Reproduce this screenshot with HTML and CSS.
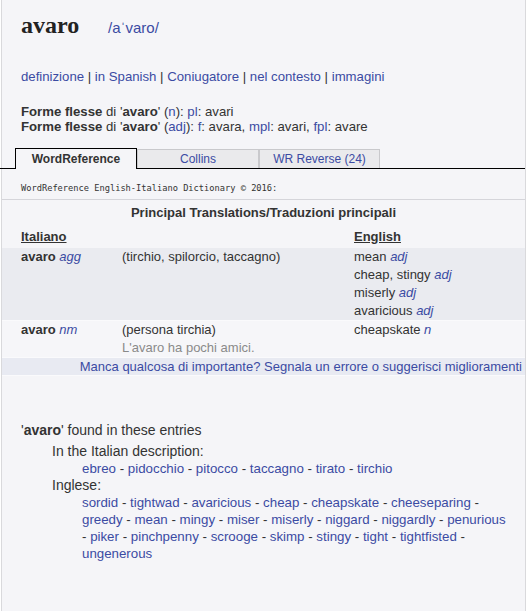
FILE: index.html
```html
<!DOCTYPE html>
<html lang="it">
<head>
<meta charset="utf-8">
<title>avaro - WordReference</title>
<link rel="stylesheet" href="styles.css">
</head>
<body>
<div class="page">
  <header class="head">
    <h1 class="hw">avaro</h1>
    <span class="pron">/aˈvaro/</span>
  </header>

  <nav class="links">
    <a href="#">definizione</a> | <a href="#">in Spanish</a> | <a href="#">Coniugatore</a> | <a href="#">nel contesto</a> | <a href="#">immagini</a>
  </nav>

  <div class="infl">
    <div><b>Forme flesse</b> di '<b>avaro</b>' (<a href="#">n</a>): <a href="#">pl</a>: avari</div>
    <div><b>Forme flesse</b> di '<b>avaro</b>' (<a href="#">adj</a>): <a href="#">f</a>: avara, <a href="#">mpl</a>: avari, <a href="#">fpl</a>: avare</div>
  </div>

  <div class="tabs">
    <span class="tab active">WordReference</span>
    <span class="tab"><a href="#">Collins</a></span>
    <span class="tab"><a href="#">WR Reverse (24)</a></span>
  </div>

  <div class="copy">WordReference English-Italiano Dictionary © 2016:</div>

  <table class="wrd">
    <tr class="title"><td colspan="3">Principal Translations/Traduzioni principali</td></tr>
    <tr class="langs"><td class="c1">Italiano</td><td class="c2"></td><td class="c3">English</td></tr>
    <tr class="even">
      <td class="c1"><b>avaro</b> <i>agg</i></td>
      <td class="c2">(tirchio, spilorcio, taccagno)</td>
      <td class="c3">mean <i>adj</i><br>cheap, stingy <i>adj</i><br>miserly <i>adj</i><br>avaricious <i>adj</i></td>
    </tr>
    <tr class="odd">
      <td class="c1"><b>avaro</b> <i>nm</i></td>
      <td class="c2">(persona tirchia)<br><span class="ex">L'avaro ha pochi amici.</span></td>
      <td class="c3">cheapskate <i>n</i></td>
    </tr>
    <tr class="more"><td colspan="3"><a href="#">Manca qualcosa di importante? Segnala un errore o suggerisci miglioramenti</a></td></tr>
  </table>

  <section class="found">
    <div class="ftitle">'<b>avaro</b>' found in these entries</div>
    <div class="sub first">In the Italian description:</div>
    <div class="list"><a href="#">ebreo</a> - <a href="#">pidocchio</a> - <a href="#">pitocco</a> - <a href="#">taccagno</a> - <a href="#">tirato</a> - <a href="#">tirchio</a></div>
    <div class="sub">Inglese:</div>
    <div class="list"><a href="#">sordid</a> - <a href="#">tightwad</a> - <a href="#">avaricious</a> - <a href="#">cheap</a> - <a href="#">cheapskate</a> - <a href="#">cheeseparing</a> - <a href="#">greedy</a> - <a href="#">mean</a> - <a href="#">mingy</a> - <a href="#">miser</a> - <a href="#">miserly</a> - <a href="#">niggard</a> - <a href="#">niggardly</a> - <a href="#">penurious</a> - <a href="#">piker</a> - <a href="#">pinchpenny</a> - <a href="#">scrooge</a> - <a href="#">skimp</a> - <a href="#">stingy</a> - <a href="#">tight</a> - <a href="#">tightfisted</a> - <a href="#">ungenerous</a></div>
  </section>
</div>
</body>
</html>
```
FILE: styles.css
```css
html, body {
  margin: 0;
  padding: 0;
  background: #ffffff;
}
body {
  font-family: "Liberation Sans", Arial, sans-serif;
  font-size: 13px;
  color: #333333;
}
a {
  color: #3b4ba3;
  text-decoration: none;
}
.page {
  margin-left: 1px;
  width: 525px;
  min-height: 611px;
  box-sizing: border-box;
  border-left: 1px solid #d9d9dc;
  border-right: 1px solid #d9d9dc;
  background: #f5f5f8;
  padding-top: 12px;
}
.head {
  display: flex;
  align-items: baseline;
  padding-left: 19px;
  height: 30px;
}
.hw {
  margin: 0;
  font-family: "Liberation Serif", "Times New Roman", serif;
  font-weight: bold;
  font-size: 24px;
  color: #222;
  width: 87px;
}
.pron {
  font-size: 15px;
  color: #3b4ba3;
}
.links {
  margin-top: 26px;
  padding-left: 19px;
  line-height: 18px;
  font-size: 13.2px;
}
.infl {
  margin-top: 18px;
  padding-left: 19px;
  line-height: 15px;
  font-size: 13.2px;
}
.tabs {
  margin-top: 14px;
  display: flex;
  align-items: flex-end;
  border-bottom: 1px solid #000;
  padding-left: 15px;
  margin-left: -2px;
  height: 20px;
}
.tab {
  box-sizing: border-box;
  width: 122px;
  height: 19px;
  text-align: center;
  font-size: 12px;
  line-height: 18px;
  background: #eaeaec;
  border: 1px solid #c9c9cc;
  border-bottom: none;
}
.tab.active {
  height: 21px;
  margin-bottom: -1px;
  background: #f5f5f8;
  border: 1px solid #000;
  border-bottom: none;
  font-weight: bold;
  line-height: 20px;
  color: #333;
}
.tab:last-child {
  width: 121px;
}
.copy {
  font-family: "DejaVu Sans Mono", monospace;
  font-size: 8.7px;
  padding-left: 19px;
  height: 30px;
  line-height: 38px;
  color: #333;
}
.wrd {
  width: 100%;
  border-collapse: collapse;
  border-top: 1px solid #d5d5da;
}
.wrd td {
  padding: 0;
  vertical-align: top;
  line-height: 18px;
}
.wrd .title td {
  text-align: center;
  font-weight: bold;
  height: 26px;
  line-height: 25px;
}
.wrd .langs td {
  font-weight: bold;
  text-decoration: underline;
  font-size: 13px;
  height: 22px;
  line-height: 22px;
}
.c1 {
  padding-left: 19px !important;
  width: 101px;
}
.c2 {
  width: 232px;
}
.wrd i {
  color: #3b4ba3;
}
.wrd .even td {
  background: #eaebf0;
  border-bottom: 1px solid #fafafc;
}
.wrd .odd td {
  background: #f6f6f9;
  border-bottom: 1px solid #fafafc;
}
.ex {
  color: #8a8a8a;
}
.wrd .more td {
  background: #e8eaf2;
  text-align: right;
  padding-right: 3px;
  height: 17px;
  line-height: 17px;
  border-bottom: 1px solid #fafafc;
}
.found {
  margin-top: 44px;
  padding-left: 19px;
  font-size: 14px;
}
.ftitle {
  line-height: 20px;
}
.sub {
  padding-left: 31px;
  line-height: 17px;
}
.sub.first {
  margin-top: 3px;
}
.list {
  padding-left: 61px;
  padding-right: 17px;
  font-size: 13.3px;
  line-height: 17px;
}
```
